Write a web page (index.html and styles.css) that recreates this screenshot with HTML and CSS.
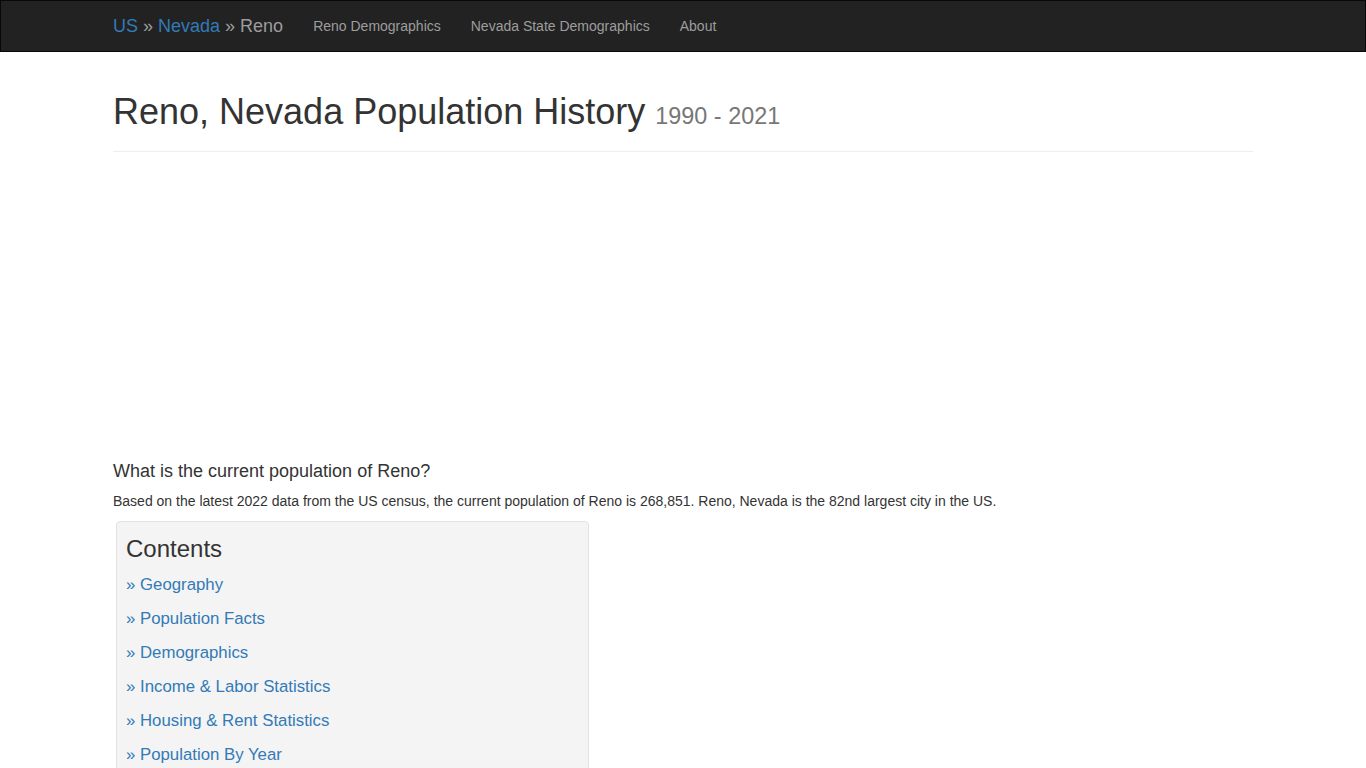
FILE: index.html
```html
<!DOCTYPE html>
<html lang="en">
<head>
<meta charset="utf-8">
<title>Reno, Nevada Population History</title>
<link rel="stylesheet" href="styles.css">
</head>
<body>
<nav class="navbar">
  <div class="container navbar-inner">
    <div class="navbar-brand"><a href="#" class="crumb">US</a> » <a href="#" class="crumb">Nevada</a> » Reno</div>
    <ul class="nav">
      <li><a href="#">Reno Demographics</a></li>
      <li><a href="#">Nevada State Demographics</a></li>
      <li><a href="#">About</a></li>
    </ul>
  </div>
</nav>
<main class="container">
  <div class="page-header">
    <h1>Reno, Nevada Population History <small>1990 - 2021</small></h1>
  </div>
  <div class="ad-space"></div>
  <h4 class="question">What is the current population of Reno?</h4>
  <p class="lead-text">Based on the latest 2022 data from the US census, the current population of Reno is 268,851. Reno, Nevada is the 82nd largest city in the US.</p>
  <div class="well">
    <h3>Contents</h3>
    <p><a href="#">» Geography</a></p>
    <p><a href="#">» Population Facts</a></p>
    <p><a href="#">» Demographics</a></p>
    <p><a href="#">» Income &amp; Labor Statistics</a></p>
    <p><a href="#">» Housing &amp; Rent Statistics</a></p>
    <p><a href="#">» Population By Year</a></p>
  </div>
</main>
</body>
</html>
```

FILE: styles.css
```css
* { box-sizing: border-box; }
html, body { margin: 0; padding: 0; }
body {
  font-family: "Liberation Sans", Arial, Helvetica, sans-serif;
  font-size: 14px;
  line-height: 1.42857143;
  color: #333;
  background: #fff;
}
a { color: #337ab7; text-decoration: none; }
.container {
  width: 1170px;
  margin: 0 auto;
  padding: 0 15px;
}
.navbar {
  background: #222;
  border: 1px solid #080808;
  min-height: 52px;
  margin-bottom: 40px;
}
.navbar-inner {
  display: flex;
  align-items: center;
  height: 50px;
}
.navbar-brand {
  font-size: 18px;
  line-height: 20px;
  padding: 15px 15px 15px 0;
  color: #9d9d9d;
}
.navbar-brand .crumb { color: #337ab7; }
.nav {
  display: flex;
  list-style: none;
  margin: 0;
  padding: 0;
}
.nav a {
  display: block;
  padding: 15px;
  line-height: 20px;
  color: #9d9d9d;
}
.page-header {
  padding-bottom: 9px;
  margin: 0 0 20px;
  border-bottom: 1px solid #eee;
}
h1 {
  font-size: 36px;
  font-weight: 500;
  line-height: 1.1;
  margin: 0 0 10px;
}
h1 small {
  font-size: 65%;
  font-weight: 400;
  color: #777;
}
.ad-space { height: 280px; }
.question {
  font-size: 18px;
  font-weight: 500;
  line-height: 1.1;
  margin: 10px 0 10px;
}
.lead-text { margin: 0 0 10px; }
.well {
  width: 473px;
  margin-left: 3px;
  background: #f4f4f4;
  border: 1px solid #e3e3e3;
  border-radius: 4px;
  padding: 14px 9px 19px;
}
.well h3 {
  font-size: 24px;
  font-weight: 500;
  line-height: 1.1;
  margin: 0 0 10px;
}
.well p {
  margin: 0 0 10px;
  font-size: 16.8px;
  line-height: 24px;
}
```
